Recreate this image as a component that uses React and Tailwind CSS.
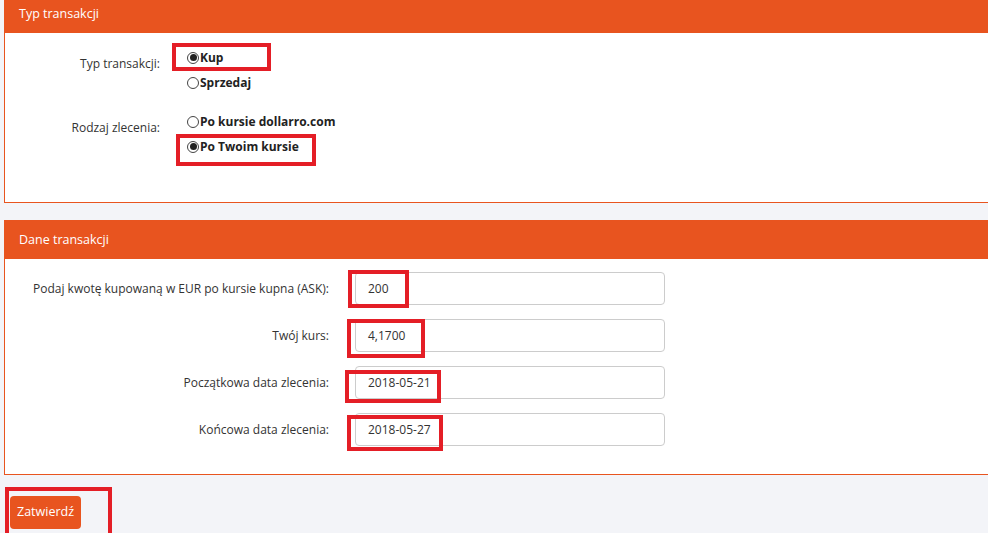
import React from 'react'

const ORANGE = 'bg-[#e8541f]'

function Radio({ checked, label }) {
  return (
    <div className="flex h-[25px] items-center">
      <span className="flex h-[12px] w-[12px] items-center justify-center rounded-full border border-[#444] bg-white">
        {checked && <span className="h-[7px] w-[7px] rounded-full bg-[#222]" />}
      </span>
      <span className="ml-[1px] font-bold text-[#222]">{label}</span>
    </div>
  )
}

function Field({ label, value }) {
  return (
    <div className="flex items-center">
      <div className="w-[324px] text-right text-[#333]">{label}</div>
      <div className="ml-[26px] flex h-[33px] w-[310px] items-center rounded-[4px] border border-[#ccc] bg-white px-[12px] text-[#333]">
        {value}
      </div>
    </div>
  )
}

function Mark({ className }) {
  return <div className={`pointer-events-none absolute border-[4px] border-[#e41e26] ${className}`} />
}

export default function App() {
  return (
    <div
      className="relative h-[533px] w-[988px] overflow-hidden bg-[#f3f4f8] text-[12px]"
      style={{ fontFamily: '"Open Sans", "Noto Sans", sans-serif' }}
    >
      <div className="-mt-[6px] ml-[4px] w-[1000px] border border-[#e8541f] bg-white">
        <div className={`${ORANGE} flex h-[38px] items-center px-[14px] text-[12.5px] text-white`}>
          Typ transakcji
        </div>
        <div className="pb-[43px] pt-[12px]">
          <div className="flex">
            <div className="w-[155px] pt-[6px] text-right leading-[25px] text-[#333]">Typ transakcji:</div>
            <div className="ml-[27px]">
              <Radio checked label="Kup" />
              <Radio label="Sprzedaj" />
            </div>
          </div>
          <div className="mt-[14px] flex">
            <div className="w-[155px] pt-[6px] text-right leading-[25px] text-[#333]">Rodzaj zlecenia:</div>
            <div className="ml-[27px]">
              <Radio label="Po kursie dollarro.com" />
              <Radio checked label="Po Twoim kursie" />
            </div>
          </div>
        </div>
      </div>

      <div className="ml-[4px] mt-[17px] w-[1000px] border border-[#e8541f] bg-white">
        <div className={`${ORANGE} flex h-[38px] items-center px-[14px] text-[12.5px] text-white`}>
          Dane transakcji
        </div>
        <div className="flex flex-col gap-[14px] pb-[28px] pt-[13px]">
          <Field label="Podaj kwotę kupowaną w EUR po kursie kupna (ASK):" value="200" />
          <Field label="Twój kurs:" value="4,1700" />
          <Field label="Początkowa data zlecenia:" value="2018-05-21" />
          <Field label="Końcowa data zlecenia:" value="2018-05-27" />
        </div>
      </div>

      <div className="ml-[10px] mt-[21px]">
        <button className={`${ORANGE} h-[33px] rounded-[4px] px-[7px] text-[12.5px] text-white`}>Zatwierdź</button>
      </div>

      <Mark className="left-[172px] top-[43px] h-[28px] w-[99px]" />
      <Mark className="left-[176px] top-[134px] h-[32px] w-[140px]" />
      <Mark className="left-[348px] top-[270px] h-[38px] w-[61px]" />
      <Mark className="left-[347px] top-[319px] h-[39px] w-[78px]" />
      <Mark className="left-[345px] top-[370px] h-[33px] w-[96px]" />
      <Mark className="left-[347px] top-[415px] h-[36px] w-[96px]" />
      <Mark className="left-[5px] top-[487px] h-[50px] w-[107px]" />
    </div>
  )
}
